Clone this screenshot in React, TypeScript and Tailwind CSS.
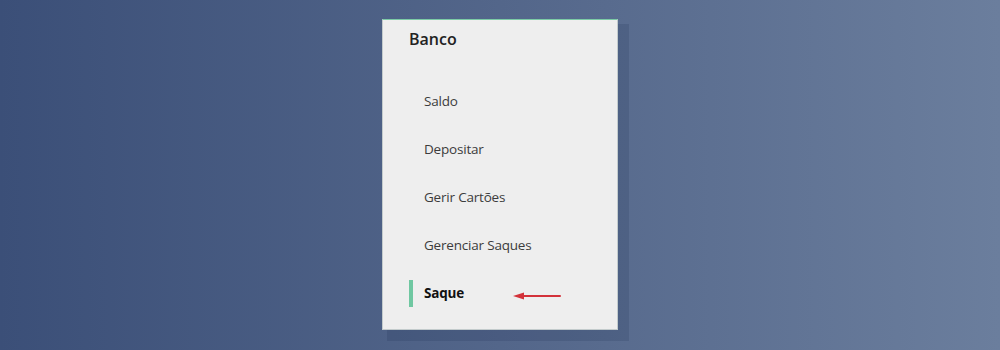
const ITEMS = ["Saldo", "Depositar", "Gerir Cartões", "Gerenciar Saques", "Saque"];
const ACTIVE = "Saque";

export default function App() {
  return (
    <div
      className="h-[350px] w-full overflow-hidden bg-gradient-to-r from-[#3b4f78] via-[#53668a] to-[#6b7e9d] pt-[19px]"
      style={{ fontFamily: '"Open Sans", "Noto Sans", sans-serif' }}
    >
      <div className="relative mx-auto h-[311px] w-[236px] border border-[#c3cbcc] border-t-[#7ccba6] bg-[#eeeeee] shadow-[8px_8px_0_3px_rgba(10,20,60,0.13)]">
        <h2 className="pl-[26px] pt-[7px] text-[16px] font-semibold leading-6 text-[#222]">Banco</h2>
        <ul className="mt-[26px]">
          {ITEMS.map((label) => {
            const active = label === ACTIVE;
            return (
              <li key={label} className="flex h-12 items-center pl-[26px]">
                <div
                  className={`flex h-[27px] items-center border-l-4 pl-[11px] text-[13.5px] tracking-[-0.2px] ${
                    active ? "border-[#6fc7a1] font-bold text-[#111]" : "border-transparent text-[#3c3c3c]"
                  }`}
                >
                  {label}
                </div>
              </li>
            );
          })}
        </ul>
        {/* seta de anotação apontando para o item ativo */}
        <svg
          className="absolute left-[130px] top-[271px]"
          width="48"
          height="10"
          viewBox="0 0 48 10"
        >
          <line x1="8" y1="5" x2="47" y2="5" stroke="#d3323a" strokeWidth="2" strokeLinecap="round" />
          <path d="M0 5 L11 1.5 L11 8.5 Z" fill="#d3323a" />
        </svg>
      </div>
    </div>
  );
}
